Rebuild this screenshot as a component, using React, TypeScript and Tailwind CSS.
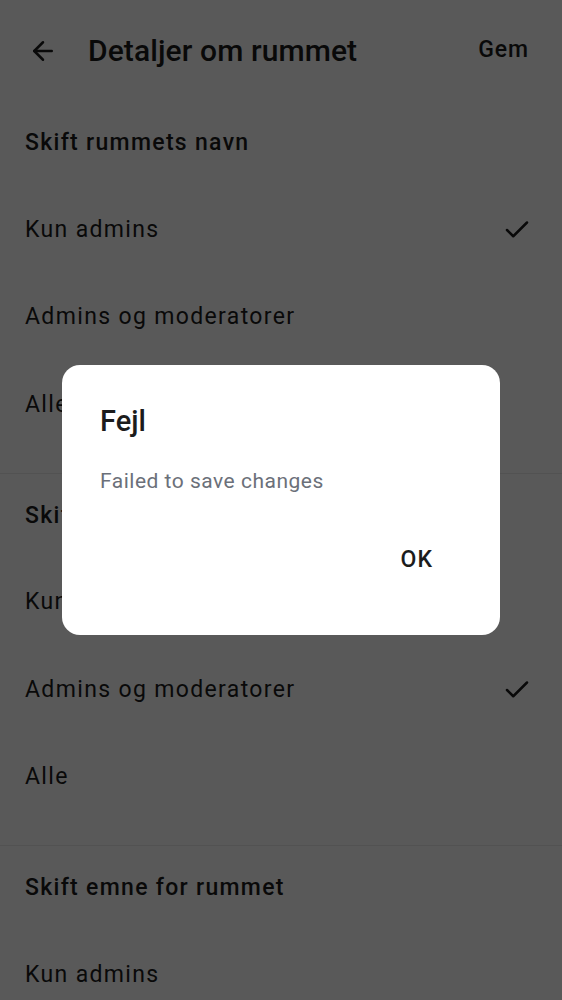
import { ArrowLeft, Check } from 'lucide-react';

type Section = { title: string; options: string[]; selected: number };

// the third section is cut off by the screen edge, only its first row shows
const sections: Section[] = [
	{ title: 'Skift rummets navn', options: ['Kun admins', 'Admins og moderatorer', 'Alle'], selected: 0 },
	{ title: 'Skift avatar for rummet', options: ['Kun admins', 'Admins og moderatorer', 'Alle'], selected: 1 },
	{ title: 'Skift emne for rummet', options: ['Kun admins'], selected: -1 },
];

const App = () => {
	return (
		<div
			className="relative h-[1000px] w-[562px] overflow-hidden bg-white text-[#1c1c1c]"
			style={{ fontFamily: 'Roboto, "Noto Sans", sans-serif' }}>
			{/* topbar */}
			<div className="flex h-[101px] items-center pl-[28px] pr-[33px]">
				<ArrowLeft size={30} strokeWidth={2} />
				<h1 className="ml-[30px] flex-1 text-[30px] font-medium tracking-[0.1px]">Detaljer om rummet</h1>
				<span className="text-[23px] font-medium tracking-[0.9px]">Gem</span>
			</div>

			{sections.map((s, i) => (
				<div key={i} className="border-b border-[#ececec] pb-[24px]">
					<div className="flex h-[85px] items-center px-[25px] text-[23px] font-medium tracking-[1.3px]">
						{s.title}
					</div>
					{s.options.map((o, j) => (
						<div
							key={j}
							className="flex h-[87.5px] items-center justify-between pl-[25px] pr-[30px] text-[23px] tracking-[1.35px]">
							<span>{o}</span>
							{j === s.selected && <Check size={30} strokeWidth={2} />}
						</div>
					))}
				</div>
			))}

			{/* scrim + dialog */}
			<div className="absolute inset-0 bg-black/65">
				<div className="absolute left-[62px] top-[365px] h-[270px] w-[438px] rounded-[18px] bg-white">
					<div className="pl-[38px] pt-[37px] text-[29px] font-medium leading-[38px]">Fejl</div>
					<div className="mt-[27px] pl-[38px] text-[21px] leading-[28px] tracking-[0.5px] text-[#6b7079]">
						Failed to save changes
					</div>
					<div className="mt-[48px] flex justify-end pr-[67px]">
						<span className="text-[23px] font-medium tracking-[1px]">OK</span>
					</div>
				</div>
			</div>
		</div>
	);
};

export default App;
